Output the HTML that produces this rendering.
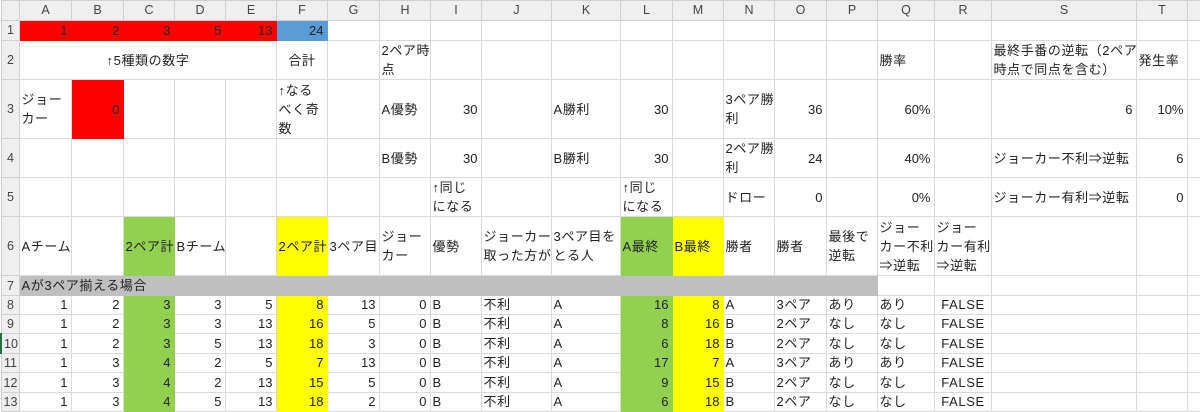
<!DOCTYPE html>
<html><head><meta charset="utf-8"><style>
body{margin:0;background:#fff;width:1200px;height:411px;overflow:hidden;font-family:"Liberation Sans","Noto Sans CJK JP",sans-serif;font-size:13px;color:#222}
table{border-collapse:collapse;table-layout:fixed;width:1200px}
td{border:1px solid #dadada;padding:0 1px 0 2px;vertical-align:middle;white-space:nowrap;overflow:hidden;line-height:19px;letter-spacing:0.6px}
tr.d td{line-height:16px}
td.r{letter-spacing:0;padding-right:3px}
.h{background:#efefef;color:#444;text-align:center;border-color:#d0d0d0;font-size:12.5px;letter-spacing:0}
.r{text-align:right}.c{text-align:center}
.red{background:#f00;border-color:#f00}.blu{background:#5b9bd5;border-color:#5b9bd5}
.g{background:#92d050;border-color:#92d050}.y{background:#ff0;border-color:#ff0}
.gr{background:#bfbfbf;border-color:#bfbfbf}
</style></head><body>
<table>
<colgroup><col style="width:18px"><col style="width:52px"><col style="width:52px"><col style="width:51px"><col style="width:51px"><col style="width:51px"><col style="width:51px"><col style="width:52px"><col style="width:51px"><col style="width:51px"><col style="width:70px"><col style="width:69px"><col style="width:52px"><col style="width:51px"><col style="width:51px"><col style="width:52px"><col style="width:51px"><col style="width:57px"><col style="width:57px"><col style="width:145px"><col style="width:51px"><col style="width:14px"></colgroup>
<tr style="height:18px"><td class="h"></td><td class="h">A</td><td class="h">B</td><td class="h">C</td><td class="h">D</td><td class="h">E</td><td class="h">F</td><td class="h">G</td><td class="h">H</td><td class="h">I</td><td class="h">J</td><td class="h">K</td><td class="h">L</td><td class="h">M</td><td class="h">N</td><td class="h">O</td><td class="h">P</td><td class="h">Q</td><td class="h">R</td><td class="h">S</td><td class="h">T</td><td class="h"></td></tr>
<tr style="height:18px"><td class="h">1</td><td class="red r">1</td><td class="red r">2</td><td class="red r">3</td><td class="red r">5</td><td class="red r">13</td><td class="blu r">24</td><td></td><td></td><td></td><td></td><td></td><td></td><td></td><td></td><td></td><td></td><td></td><td></td><td></td><td></td><td></td></tr>
<tr style="height:39px"><td class="h">2</td><td colspan="5" class="c">↑5種類の数字</td><td class="c">合計</td><td></td><td>2ペア時<br>点</td><td></td><td></td><td></td><td></td><td></td><td></td><td></td><td></td><td>勝率</td><td></td><td>最終手番の逆転（2ペア目<br>時点で同点を含む）</td><td>発生率</td><td></td></tr>
<tr style="height:59px"><td class="h">3</td><td>ジョー<br>カー</td><td class="red r">0</td><td></td><td></td><td></td><td>↑なる<br>べく奇<br>数</td><td></td><td>A優勢</td><td class="r">30</td><td></td><td>A勝利</td><td class="r">30</td><td></td><td>3ペア勝<br>利</td><td class="r">36</td><td></td><td class="r">60%</td><td></td><td class="r">6</td><td class="r">10%</td><td></td></tr>
<tr style="height:39px"><td class="h">4</td><td></td><td></td><td></td><td></td><td></td><td></td><td></td><td>B優勢</td><td class="r">30</td><td></td><td>B勝利</td><td class="r">30</td><td></td><td>2ペア勝<br>利</td><td class="r">24</td><td></td><td class="r">40%</td><td></td><td>ジョーカー不利⇒逆転</td><td class="r">6</td><td></td></tr>
<tr style="height:38px"><td class="h">5</td><td></td><td></td><td></td><td></td><td></td><td></td><td></td><td></td><td>↑同じ<br>になる</td><td></td><td></td><td>↑同じ<br>になる</td><td></td><td>ドロー</td><td class="r">0</td><td></td><td class="r">0%</td><td></td><td>ジョーカー有利⇒逆転</td><td class="r">0</td><td></td></tr>
<tr style="height:59px"><td class="h">6</td><td>Aチーム</td><td></td><td class="g">2ペア計</td><td>Bチーム</td><td></td><td class="y">2ペア計</td><td>3ペア目</td><td>ジョー<br>カー</td><td>優勢</td><td>ジョーカー<br>取った方が</td><td>3ペア目を<br>とる人</td><td class="g">A最終</td><td class="y">B最終</td><td>勝者</td><td>勝者</td><td>最後で<br>逆転</td><td>ジョー<br>カー不利<br>⇒逆転</td><td>ジョー<br>カー有利<br>⇒逆転</td><td></td><td></td><td></td></tr>
<tr class="d" style="height:20px"><td class="h">7</td><td colspan="16" class="gr">Aが3ペア揃える場合</td><td></td><td></td><td></td><td></td><td></td></tr>
<tr class="d" style="height:19px"><td class="h">8</td><td class="r">1</td><td class="r">2</td><td class="g r">3</td><td class="r">3</td><td class="r">5</td><td class="y r">8</td><td class="r">13</td><td class="r">0</td><td>B</td><td>不利</td><td>A</td><td class="g r">16</td><td class="y r">8</td><td>A</td><td>3ペア</td><td>あり</td><td>あり</td><td class="c">FALSE</td><td></td><td></td><td></td></tr>
<tr class="d" style="height:19px"><td class="h">9</td><td class="r">1</td><td class="r">2</td><td class="g r">3</td><td class="r">3</td><td class="r">13</td><td class="y r">16</td><td class="r">5</td><td class="r">0</td><td>B</td><td>不利</td><td>A</td><td class="g r">8</td><td class="y r">16</td><td>B</td><td>2ペア</td><td>なし</td><td>なし</td><td class="c">FALSE</td><td></td><td></td><td></td></tr>
<tr class="d" style="height:20px"><td class="h" style="border-left:2px solid #217346">10</td><td class="r">1</td><td class="r">2</td><td class="g r">3</td><td class="r">5</td><td class="r">13</td><td class="y r">18</td><td class="r">3</td><td class="r">0</td><td>B</td><td>不利</td><td>A</td><td class="g r">6</td><td class="y r">18</td><td>B</td><td>2ペア</td><td>なし</td><td>なし</td><td class="c">FALSE</td><td></td><td></td><td></td></tr>
<tr class="d" style="height:19px"><td class="h">11</td><td class="r">1</td><td class="r">3</td><td class="g r">4</td><td class="r">2</td><td class="r">5</td><td class="y r">7</td><td class="r">13</td><td class="r">0</td><td>B</td><td>不利</td><td>A</td><td class="g r">17</td><td class="y r">7</td><td>A</td><td>3ペア</td><td>あり</td><td>あり</td><td class="c">FALSE</td><td></td><td></td><td></td></tr>
<tr class="d" style="height:20px"><td class="h">12</td><td class="r">1</td><td class="r">3</td><td class="g r">4</td><td class="r">2</td><td class="r">13</td><td class="y r">15</td><td class="r">5</td><td class="r">0</td><td>B</td><td>不利</td><td>A</td><td class="g r">9</td><td class="y r">15</td><td>B</td><td>2ペア</td><td>なし</td><td>なし</td><td class="c">FALSE</td><td></td><td></td><td></td></tr>
<tr class="d" style="height:19px"><td class="h">13</td><td class="r">1</td><td class="r">3</td><td class="g r">4</td><td class="r">5</td><td class="r">13</td><td class="y r">18</td><td class="r">2</td><td class="r">0</td><td>B</td><td>不利</td><td>A</td><td class="g r">6</td><td class="y r">18</td><td>B</td><td>2ペア</td><td>なし</td><td>なし</td><td class="c">FALSE</td><td></td><td></td><td></td></tr>
</table>
</body></html>
